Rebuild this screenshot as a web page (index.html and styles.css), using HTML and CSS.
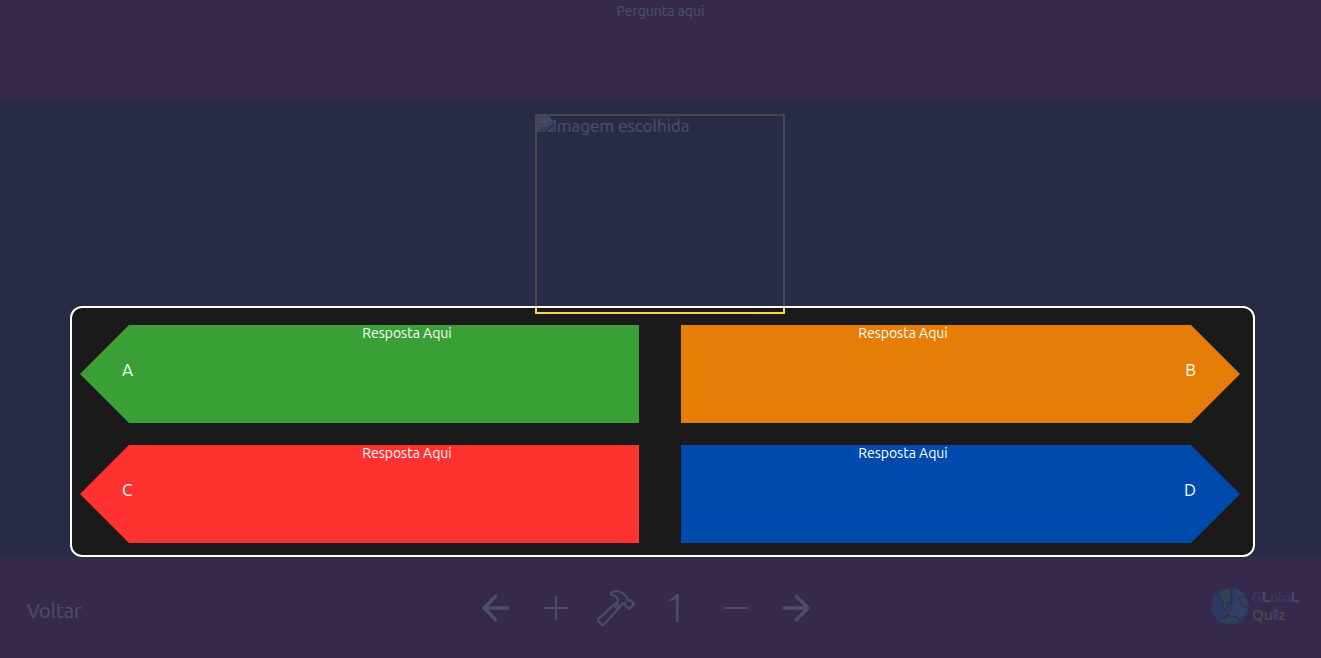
FILE: index.html
```html
<!DOCTYPE html>
<html lang="pt-BR">
<head>
<meta charset="utf-8">
<meta name="viewport" content="width=device-width, initial-scale=1">
<title>Global Quiz</title>
<link rel="stylesheet" href="styles.css">
</head>
<body>
<header class="question">Pergunta aqui</header>
<main class="stage">
  <div class="picture" role="img" aria-label="Imagem escolhida">
    <svg class="broken" width="16" height="16" viewBox="0 0 16 16" aria-hidden="true">
      <path d="M0 0h11l5 5v3L7 16H0z" fill="#a9b8dc"/>
      <path d="M11 0v5h5z" fill="#e8ecf5"/>
      <path d="M2 7a2 2 0 0 1 3-2 2 2 0 0 1 4 2z" fill="#fff"/>
      <path d="M1 15l6-5 3 2-4 3z" fill="#4f9a3c"/>
      <path d="M16 10v6H9z" fill="#a9b8dc"/>
    </svg>
    <span>Imagem escolhida</span>
  </div>
  <section class="answers">
    <button class="answer left green"><span class="letter">A</span><span class="text">Resposta Aqui</span></button>
    <button class="answer right orange"><span class="text">Resposta Aqui</span><span class="letter">B</span></button>
    <button class="answer left red"><span class="letter">C</span><span class="text">Resposta Aqui</span></button>
    <button class="answer right blue"><span class="text">Resposta Aqui</span><span class="letter">D</span></button>
  </section>
</main>
<footer class="toolbar">
  <a class="back" href="#">Voltar</a>
  <nav class="tools">
    <button class="tool" aria-label="Anterior"><svg width="40" height="40" viewBox="0 0 40 40"><path d="M32 20H8M19.500 8.500L8 20 19.500 31.500" stroke-width="3.500"/></svg></button>
    <button class="tool" aria-label="Adicionar"><svg width="40" height="40" viewBox="0 0 40 40"><path d="M20 8.500v23M8.500 20h23" stroke-width="2.200"/></svg></button>
    <button class="tool" aria-label="Editar"><svg width="40" height="40" viewBox="0 0 40 40"><path d="M18.500 16L2.500 31Q1.500 32.200 2.500 33.200L5.700 36.600Q6.700 37.500 7.700 36.500L23 20M20.500 14.500L17.500 17L22 21.500L24 18.500M15.300 4.700C20 2 26 3.500 30.500 8L31.500 12.500L35 12.300L38 16L33.300 21L29.300 17.200V14.800L26.500 15.500L23.500 19L20 15.500C24 12 21.500 7.500 15.300 7Q14 5.700 15.300 4.700Z" stroke-width="2"/></svg></button>
    <output class="tool number">1</output>
    <button class="tool" aria-label="Remover"><svg width="40" height="40" viewBox="0 0 40 40"><path d="M8.500 20h23" stroke-width="2.200"/></svg></button>
    <button class="tool" aria-label="Próxima"><svg width="40" height="40" viewBox="0 0 40 40"><path d="M8 20h24M20.500 8.500L32 20 20.500 31.500" stroke-width="3.500"/></svg></button>
  </nav>
  <div class="logo">
    <svg width="40" height="40" viewBox="0 0 40 40" aria-hidden="true">
      <circle cx="20" cy="20" r="18.500" fill="#3c7ccc"/>
      <path d="M24 2a18.500 18.500 0 0 1 14 22C33 34 24 33 15 32c9-6 13-16 9-30z" fill="#5c98e8"/>
      <g fill="#58b868" stroke="#102c58" stroke-width="1.300" stroke-linejoin="round">
        <path d="M7.500 7.500Q13 2 21 2L20 7l2 4-1.500 6-3-1-1 3 2 3-2 3-3-3-1.500-4 1.500-2-3-3z"/>
        <path d="M29.500 12l4-1.500h3Q39 16 37.500 22l-5-2-2.500-4z"/>
        <path d="M8 34.500l4-2.500 4-.5 2-2.500 4 1.500 5 .5 2 3-1 3Q18 41 8 34.500z"/>
      </g>
      <circle cx="20" cy="20" r="18.500" fill="none" stroke="#2c64a4" stroke-width="1"/>
    </svg>
    <div class="brand">
      <div class="global">G<b>L</b>oba<b>L</b></div>
      <div class="quiz">Qu<svg width="5" height="12" viewBox="0 0 5 12" aria-hidden="true"><path d="M1 1h3v8L2.500 11.500 1 9z" fill="#527fae" stroke="#d8e0ec"/></svg>z</div>
    </div>
  </div>
</footer>
</body>
</html>
```
FILE: styles.css
```css
* { box-sizing: border-box; }
body {
  margin: 0;
  min-height: 100vh;
  display: flex;
  flex-direction: column;
  overflow: hidden;
  background: #1a1a1a;
  color: #fff;
  font-family: Ubuntu, "Noto Sans", sans-serif;
  font-size: 17px;
}
button { border: 0; padding: 0; background: none; color: inherit; font: inherit; cursor: pointer; }
.question {
  flex-shrink: 0;
  height: 99px;
  background: #7a0a40;
  text-align: center;
  font-size: 14px;
  line-height: 22px;
}
.stage {
  flex: 1;
  display: flex;
  flex-direction: column;
  align-items: center;
  padding: 15px 66px 0 70px;
}
.picture {
  display: flex;
  align-items: flex-start;
  width: 250px;
  height: 200px;
  margin-right: 6px;
  border: 2px solid #ffd644;
  line-height: 20px;
}
/* The shadow dims everything outside the answer panel. */
.answers {
  position: relative;
  z-index: 1;
  width: 100%;
  margin-top: -8px;
  display: grid;
  grid-template-columns: 1fr 1fr;
  gap: 22px 42px;
  padding: 17px 13px 12px 8px;
  border: 2px solid #fff;
  border-radius: 12px;
  box-shadow: 0 0 0 100vmax rgba(43, 47, 79, 0.85);
}
.answer {
  display: flex;
  align-items: flex-start;
  height: 98px;
}
.left { padding-left: 42px; clip-path: polygon(49px 0, 100% 0, 100% 100%, 49px 100%, 0 50%); }
.right { padding-right: 44px; clip-path: polygon(0 0, calc(100% - 49px) 0, 100% 50%, calc(100% - 49px) 100%, 0 100%); }
.green { background: #3a9f37; }
.orange { background: #e57d06; }
.red { background: #ff3131; }
.blue { background: #004aad; }
.letter { width: 20px; line-height: 90px; }
.left .letter { text-align: left; }
.right .letter { text-align: right; }
.text { flex: 1; font-size: 14px; line-height: 16px; text-align: center; }
.left .text { padding-left: 33px; }
.right .text { padding-right: 51px; }
.toolbar {
  flex-shrink: 0;
  height: 100px;
  display: flex;
  align-items: center;
  justify-content: space-between;
  padding: 0 22px 0 27px;
  background: #7a0a40;
}
.back { padding-top: 4px; color: inherit; font-size: 20px; text-decoration: none; }
.tools { display: flex; }
.tool { width: 60px; height: 40px; display: flex; align-items: center; justify-content: center; }
.tool svg { fill: none; stroke: #fff; stroke-linecap: round; stroke-linejoin: round; }
.number { font-size: 39px; font-weight: 300; line-height: 40px; }
.logo { display: flex; align-items: center; gap: 2px; padding-bottom: 4px; }
.brand { width: 47px; line-height: 17px; }
.global { color: #c078ac; font-family: "Liberation Serif", serif; font-size: 14px; }
.global b { color: #c4e6ff; font-family: "Liberation Sans", sans-serif; }
.quiz { color: #ffe034; font-family: "Noto Sans", sans-serif; font-size: 15px; font-weight: 500; }
.quiz svg { vertical-align: -1px; }
```
